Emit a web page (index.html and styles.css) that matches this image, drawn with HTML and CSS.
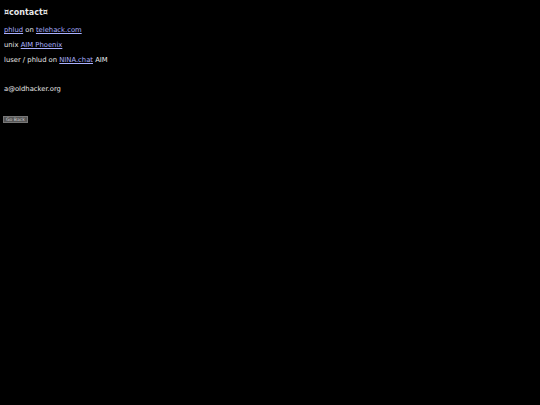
FILE: index.html
```html
<!DOCTYPE html>
<html>
<head>
<meta charset="utf-8">
<link rel="stylesheet" href="styles.css">
</head>
<body>
<div class="title">¤contact¤</div>
<div class="line"><a href="#">phlud</a> on <a href="#">telehack.com</a></div>
<div class="line">unix <a href="#">AIM Phoenix</a></div>
<div class="line">luser / phlud on <a href="#">NINA.chat</a> AIM</div>
<div class="line gap">a@oldhacker.org</div>
<div class="btnrow"><button class="btn">Go Back</button></div>
</body>
</html>
```
FILE: styles.css
```css
html, body { background: #000; }
body {
  margin: 0;
  padding: 4px;
  color: #e8e8e8;
  font-family: "DejaVu Sans", Verdana, sans-serif;
  font-size: 6.8px;
}
.title {
  font-weight: bold;
  font-size: 8px;
  line-height: 18px;
  margin-bottom: 1px;
}
.line {
  line-height: 15px;
}
.gap { margin-top: 13.5px; }
a { color: #aab0ff; }
.btnrow { margin-top: 19px; margin-left: -1px; }
.btn {
  display: block;
  font-family: "DejaVu Sans", Verdana, sans-serif;
  font-size: 4.6px;
  line-height: 5px;
  height: 7px;
  background: #555;
  color: #ccc;
  border: 1px solid #777;
  padding: 0 2px;
  margin: 0;
}
```
